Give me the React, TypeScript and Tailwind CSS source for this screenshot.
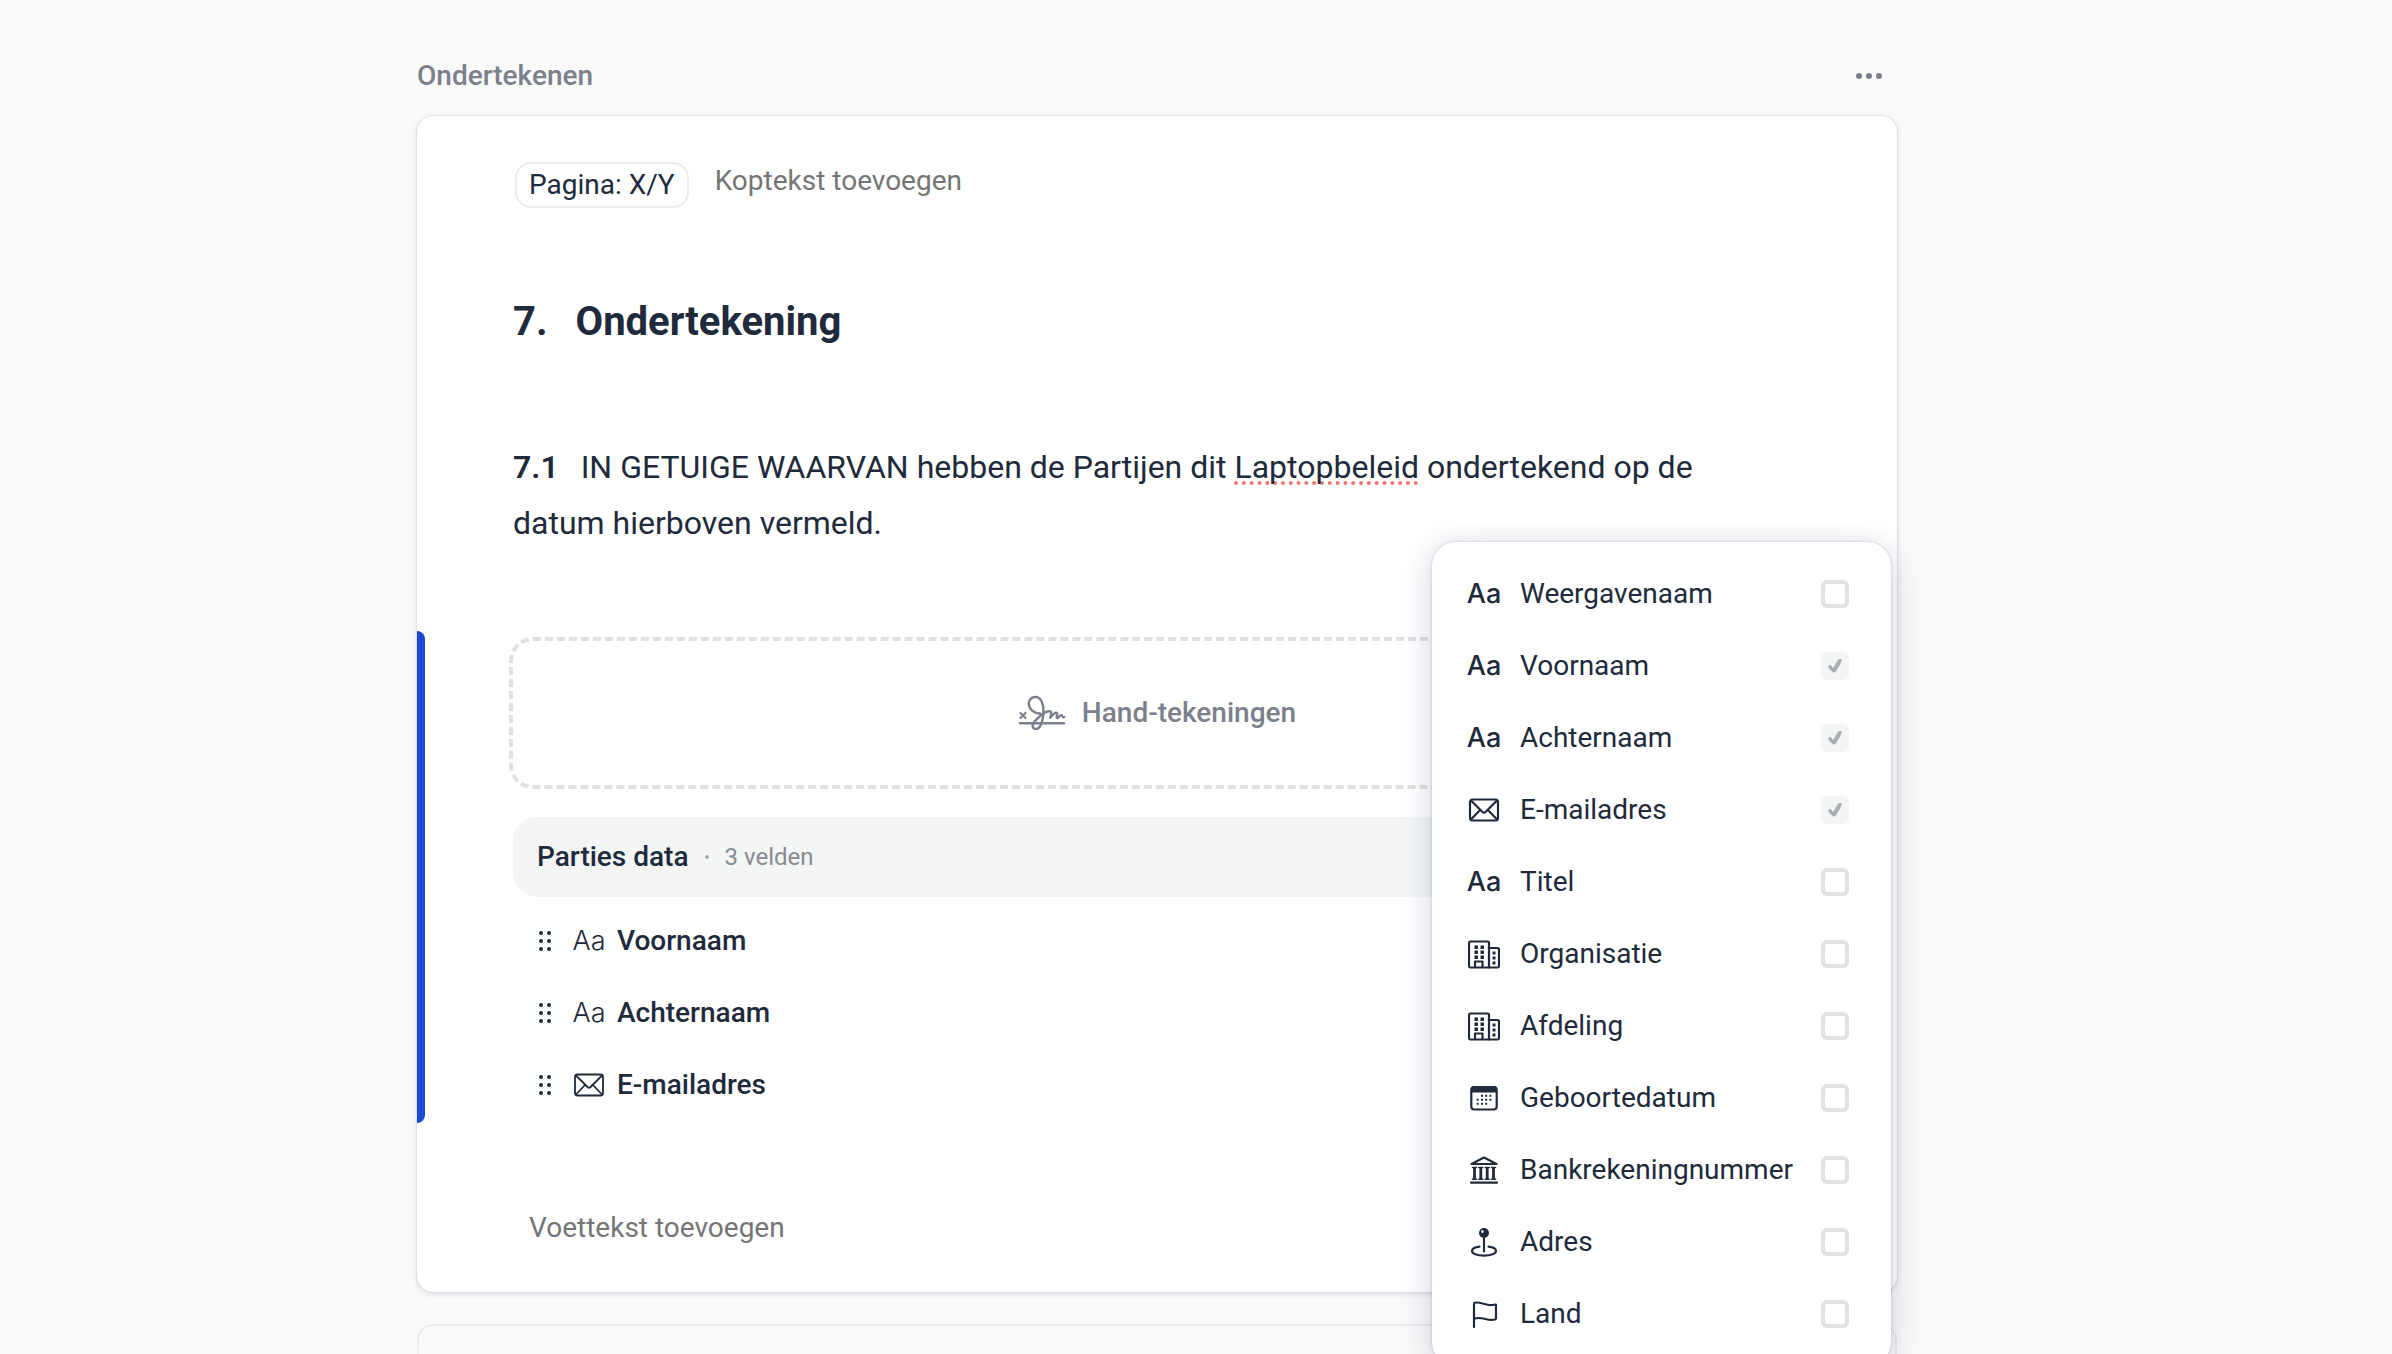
import { useState } from "react";
import type { ReactNode } from "react";

type IconName = "text" | "mail" | "building" | "calendar" | "bank" | "pin" | "flag";

interface Field {
  id: string;
  label: string;
  icon: IconName;
  locked?: boolean;
}

const FIELDS: Field[] = [
  { id: "display", label: "Weergavenaam", icon: "text" },
  { id: "first", label: "Voornaam", icon: "text", locked: true },
  { id: "last", label: "Achternaam", icon: "text", locked: true },
  { id: "email", label: "E-mailadres", icon: "mail", locked: true },
  { id: "title", label: "Titel", icon: "text" },
  { id: "org", label: "Organisatie", icon: "building" },
  { id: "dept", label: "Afdeling", icon: "building" },
  { id: "birth", label: "Geboortedatum", icon: "calendar" },
  { id: "bank", label: "Bankrekeningnummer", icon: "bank" },
  { id: "address", label: "Adres", icon: "pin" },
  { id: "country", label: "Land", icon: "flag" },
];

export default function App() {
  return (
    <main className="h-screen overflow-hidden bg-[#fafafa] pr-[78px] font-['Roboto',sans-serif] text-[28px] leading-10 text-[#202a3b]">
      <div className="mx-auto max-w-[1480px] pt-14">
        <header className="mb-5 flex items-center justify-between">
          <h1 className="font-medium text-[#7b808a]">Ondertekenen</h1>
          <button type="button" aria-label="Meer opties" className="mr-3 text-[#7b808a]">
            <svg viewBox="0 0 32 32" className="size-8" fill="currentColor">
              <circle cx="6" cy="16" r="3" />
              <circle cx="16" cy="16" r="3" />
              <circle cx="26" cy="16" r="3" />
            </svg>
          </button>
        </header>

        <article className="rounded-2xl bg-white pt-[46px] pb-11 shadow-[0_0_2px_rgba(30,35,90,0.2),0_2px_6px_rgba(30,35,90,0.14)]">
          <div className="flex items-start gap-[26px] px-[98px]">
            <span className="flex h-[46px] items-center rounded-2xl border-2 border-[#ececec] px-3">
              Pagina: X/Y
            </span>
            <input
              aria-label="Koptekst"
              placeholder="Koptekst toevoegen"
              className="h-[38px] flex-1 outline-none placeholder:text-[#757575]"
            />
          </div>

          <h2 className="mt-[90px] flex gap-7 px-24 text-[40px] leading-12 font-bold">
            <span>7.</span>
            <span>Ondertekening</span>
          </h2>

          <p className="mt-[93px] pr-28 pl-24 text-[32px] leading-14">
            <span className="mr-[22px] font-semibold">7.1</span>
            IN GETUIGE WAARVAN hebben de Partijen dit{" "}
            <span className="underline decoration-[#f2766b] decoration-dotted decoration-4 underline-offset-3 [text-decoration-skip-ink:none]">
              Laptopbeleid
            </span>{" "}
            ondertekend op de datum hierboven vermeld.
          </p>

          <section className="relative mt-20 flex">
            <div className="w-2 rounded-r-lg bg-[#1d48d3]" />
            <div className="flex-1 pt-1.5 pr-24 pb-0.5 pl-22">
              <button
                type="button"
                className="-mx-1 flex h-[152px] w-[calc(100%+8px)] items-center justify-center gap-4 rounded-3xl border-4 border-dashed border-[#dfe0e1] font-medium text-[#7b808a]"
              >
                <SignatureIcon />
                Hand-tekeningen
              </button>

              <div className="mt-7 mb-2 flex h-20 items-center rounded-3xl bg-[#f4f6f6] px-6">
                <h3 className="font-medium">Parties data</h3>
                <span className="mx-4 size-1 rounded-full bg-[#a5a8ae]" />
                <span className="text-2xl text-[#868a92]">3 velden</span>
              </div>

              <ul>
                {FIELDS.filter((f) => f.locked).map((f) => (
                  <li key={f.id} className="flex h-18 items-center px-6">
                    <button type="button" aria-label={`${f.label} verplaatsen`} className="mr-5">
                      <GripIcon />
                    </button>
                    <FieldIcon name={f.icon} thin />
                    <span className="ml-3 font-medium">{f.label}</span>
                  </li>
                ))}
              </ul>
            </div>
            <FieldMenu />
          </section>

          <div className="mt-[85px] px-28">
            <input
              aria-label="Voettekst"
              placeholder="Voettekst toevoegen"
              className="block h-10 w-full outline-none placeholder:text-[#757575]"
            />
          </div>
        </article>

        <div className="mt-8 h-40 rounded-2xl border-2 border-[#ebebeb]" />
      </div>
    </main>
  );
}

function FieldMenu() {
  const [checked, setChecked] = useState<string[]>(
    FIELDS.filter((f) => f.locked).map((f) => f.id),
  );

  const toggle = (id: string) =>
    setChecked((prev) => (prev.includes(id) ? prev.filter((x) => x !== id) : [...prev, id]));

  return (
    <div className="absolute -top-[89px] right-1.5 w-[459px] rounded-3xl bg-white py-4 shadow-[0_0_3px_rgba(30,35,90,0.22),0_6px_32px_rgba(30,35,90,0.2)]">
      {FIELDS.map((f) => (
        <label key={f.id} className="flex h-18 items-center gap-5 pr-[42px] pl-9">
          <FieldIcon name={f.icon} />
          <span className="flex-1 whitespace-nowrap">{f.label}</span>
          <span className="grid size-7">
            <input
              type="checkbox"
              checked={checked.includes(f.id)}
              disabled={f.locked}
              onChange={() => toggle(f.id)}
              className="size-7 appearance-none rounded-md border-4 border-[#e1e2e3] bg-white [grid-area:1/1] checked:border-[#f4f6f6] checked:bg-[#f4f6f6]"
            />
            {checked.includes(f.id) && (
              <svg viewBox="0 0 28 28" className="size-7 text-[#aaacb3] [grid-area:1/1]" fill="currentColor">
                <path d="M7.2 14.2c.2-1.3 1.8-1.7 2.7-.7l2.1 2.4 4.8-7.7c.9-1.3 4.4-1.8 3.9.3-1.2 3.8-3.6 7.7-6 11.2-.8 1.2-2.600 1.2-3.400.1-1.4-1.6-4.3-4.2-4.1-5.6z" />
              </svg>
            )}
          </span>
        </label>
      ))}
    </div>
  );
}

function FieldIcon({ name, thin = false }: { name: IconName; thin?: boolean }) {
  if (name === "text") {
    return (
      <span
        className={
          thin
            ? "flex w-8 justify-center font-['Inter',sans-serif] text-[27px] font-light"
            : "flex w-8 justify-center font-['Inter',sans-serif] text-[27px] font-medium"
        }
      >
        Aa
      </span>
    );
  }
  return (
    <svg
      viewBox="0 0 32 32"
      className="size-8 shrink-0"
      fill="none"
      stroke="currentColor"
      strokeWidth={thin ? 1.8 : 2.2}
      strokeLinecap="round"
      strokeLinejoin="round"
      aria-hidden="true"
    >
      {GLYPHS[name]}
    </svg>
  );
}

const GLYPHS: Record<Exclude<IconName, "text">, ReactNode> = {
  mail: (
    <>
      <rect x="2" y="5.5" width="28" height="21" rx="2.5" />
      <path d="M3 6.500 14.500 18q1.500 1.400 3 0L29 6.500M3 25.500l9-9.500M29 25.500 20 16" />
    </>
  ),
  building: (
    <>
      <path d="M2.5 3.500h17a1.500 1.500 0 0 1 1.500 1.500v24.500H2.500A1.500 1.500 0 0 1 1 28V5a1.500 1.500 0 0 1 1.500-1.500z" />
      <path d="M21 10h8.500A1.500 1.500 0 0 1 31 11.500V28a1.500 1.500 0 0 1-1.500 1.500H21" />
      <path d="M7 29v-5.500h7.500V29" />
      <g fill="currentColor" stroke="none">
        <path d="M6.500 7.500H10V11H6.500zM12.500 7.500H16V11h-3.500zM6.500 12.500H10V16H6.500zM12.500 12.500H16V16h-3.500zM6.500 17.500H10V21H6.500zM12.500 17.500H16V21h-3.500z" />
        <path d="M24.500 13.500h3v3h-3zM24.500 18.500h3v3h-3zM24.500 23.500h3v3h-3z" />
      </g>
    </>
  ),
  calendar: (
    <>
      <rect x="3.3" y="5" width="25.4" height="22.5" rx="3" />
      <path d="M3 10.500V7q0-3 3-3h20q3 0 3 3v3.500z" fill="currentColor" stroke="none" />
      <g fill="currentColor" stroke="none">
        <path d="M13 12.700h2v2h-2zM17.200 12.700h2v2h-2zM21.400 12.700h2v2h-2zM8.700 16.700h2v2h-2zM13 16.700h2v2h-2zM17.200 16.700h2v2h-2zM21.400 16.700h2v2h-2zM8.700 20.700h2v2h-2zM13 20.700h2v2h-2zM17.200 20.700h2v2h-2z" />
      </g>
    </>
  ),
  bank: (
    <>
      <path d="M3.500 10 16 3.500 28.500 10zM3 28.700h26" />
      <path d="M6.500 14v11M12.800 14v11M19.200 14v11M25.500 14v11" strokeWidth="2.8" strokeLinecap="butt" />
      <path
        d="M4.500 13.500h4M10.800 13.500h4M17.200 13.500h4M23.500 13.500h4M4.500 25.300h4M10.800 25.300h4M17.200 25.300h4M23.500 25.300h4"
        strokeWidth="1.500"
      />
    </>
  ),
  pin: (
    <>
      <circle cx="16" cy="7" r="5" fill="currentColor" stroke="none" />
      <circle cx="14.4" cy="5.6" r="1.3" fill="#fff" stroke="none" />
      <path d="M16 11v14.500" />
      <path d="M11.500 20.700C6.500 21.300 4 23 4 25c0 2.600 5 4.700 12 4.700s12-2.100 12-4.700c0-2-2.500-3.700-7.500-4.300" />
    </>
  ),
  flag: (
    <path d="M6 29V6q0-1.500 1.500-1.500C13 4.200 16 6.500 21 7q3 .3 6.200-.5.8-.1.8.8v13q0 1-1 1.200c-3.500.8-6.500.3-9.500-.5-4-1-7.500-1.500-11-.5" />
  ),
};

function SignatureIcon() {
  return (
    <svg
      viewBox="0 0 48 36"
      className="h-9 w-12"
      fill="none"
      stroke="currentColor"
      strokeWidth="2.4"
      strokeLinecap="round"
      strokeLinejoin="round"
      aria-hidden="true"
    >
      <path d="M2.500 18l5 5M7.500 18l-5 5" strokeWidth="2.200" />
      <path d="M2 28.200h44" />
      <path d="M22 18.500C15.500 18.500 10.800 13.500 10.800 8.500 10.800 4.500 13.800 2 17.500 2c5 0 8 6 8 13.500 0 10-3 18.500-7.500 18.500-4 0-4.500-4.500-1.500-7.500C20.500 22.500 25 17 30.500 16.200c3.500-.4 3.300 3 1.700 6.600 2.300-3 5.500-5.800 6.800-4.800 1.400 1-1.400 4.700.2 5 1.500.2 2.800-3.200 4.300-2.900 1.200.3.500 2.600 2.700 2" />
    </svg>
  );
}

function GripIcon() {
  return (
    <svg viewBox="0 0 16 32" className="h-8 w-4" fill="currentColor" aria-hidden="true">
      {[8, 16, 24].map((y) => (
        <g key={y}>
          <circle cx="4" cy={y} r="2" />
          <circle cx="12" cy={y} r="2" />
        </g>
      ))}
    </svg>
  );
}
